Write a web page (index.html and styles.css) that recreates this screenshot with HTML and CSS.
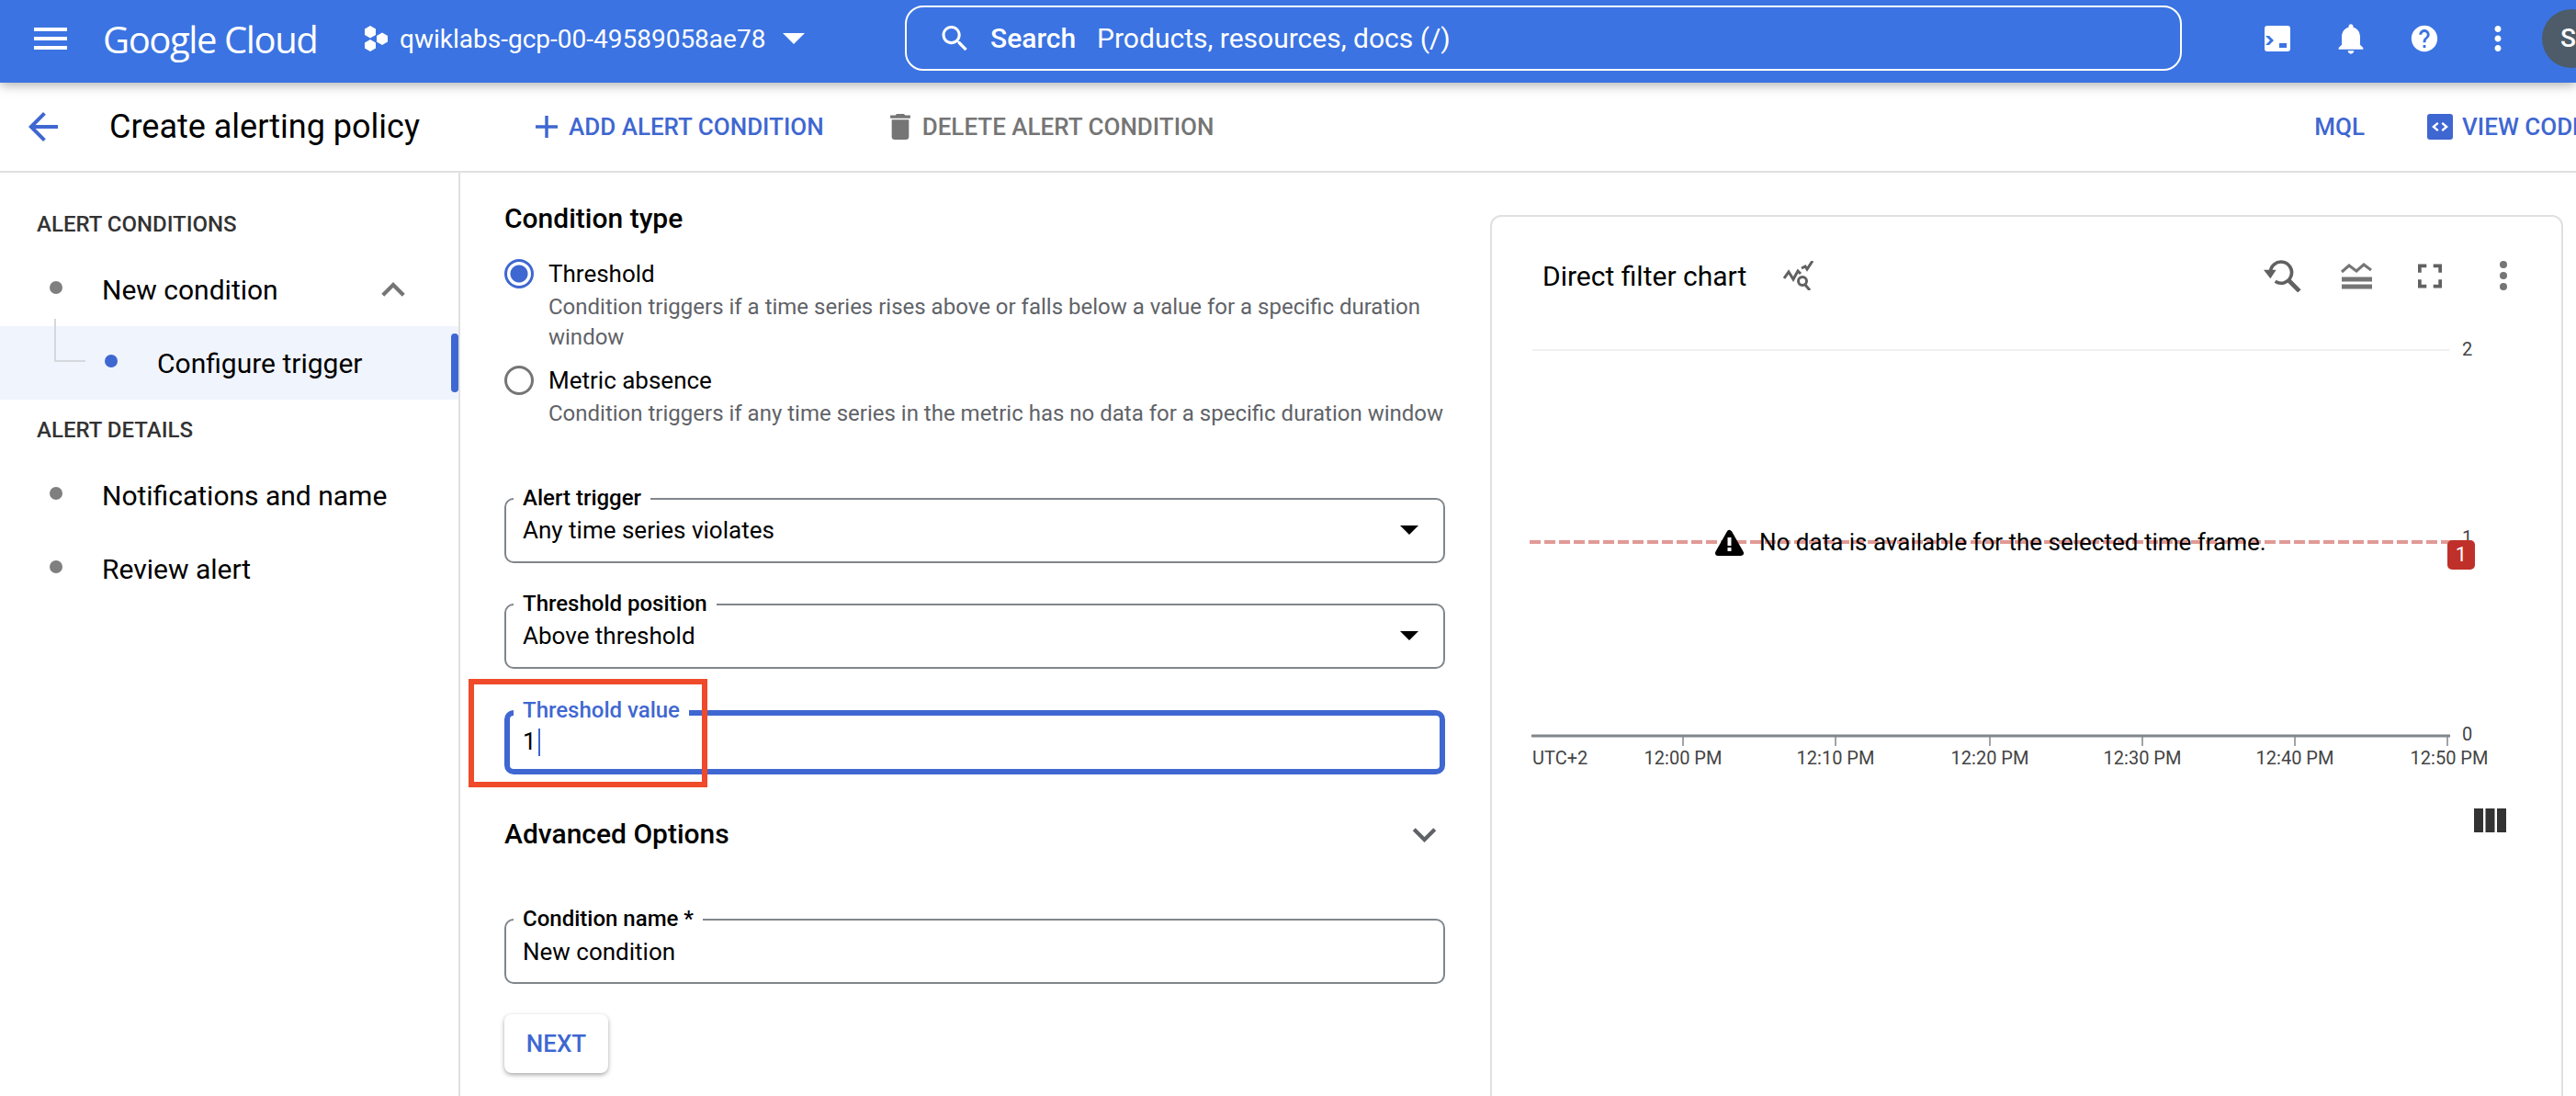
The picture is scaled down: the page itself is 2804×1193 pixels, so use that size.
FILE: index.html

```html
<!DOCTYPE html>
<html lang="en">
<head>
  <meta charset="UTF-8" />
  <title>Create alerting policy - Google Cloud</title>
  <link rel="stylesheet" href="styles.css">
</head>
<body>
  <header class="topbar">
    <svg class="menu-icon" viewBox="0 0 24 24"><path d="M3 18h18v-2H3v2zm0-5h18v-2H3v2zm0-7v2h18V6H3z"/></svg>
    <span class="logo">Google Cloud</span>
    <svg class="project-icon" viewBox="0 0 27 28">
      <polygon points="7,0 13,3.5 13,10 7,13.5 1,10 1,3.5"/>
      <polygon points="20,7.5 26,11 26,17.5 20,21 14,17.5 14,11"/>
      <polygon points="7,15 13,18.5 13,24.500 7,28 1,24.500 1,18.5"/>
    </svg>
    <span class="project-name">qwiklabs-gcp-00-49589058ae78</span>
    <span class="project-caret"></span>
    <div class="search">
      <svg class="search-icon" viewBox="3 3 18 18"><path d="M15.5 14h-.79l-.28-.27C15.41 12.59 16 11.11 16 9.5 16 5.91 13.09 3 9.5 3S3 5.91 3 9.5 5.91 16 9.5 16c1.61 0 3.09-.59 4.23-1.57l.27.28v.79l5 4.99L20.49 19l-4.99-5zm-6 0C7.01 14 5 11.99 5 9.5S7.01 5 9.5 5 14 7.01 14 9.5 11.99 14 9.5 14z"/></svg>
      <span class="search-word">Search</span>
      <span class="search-hint">Products, resources, docs (/)</span>
    </div>
    <div class="top-icons">
      <span class="top-icon">
        <svg width="28" height="28" viewBox="0 0 28 28"><path fill-rule="evenodd" d="M3 0h22a3 3 0 0 1 3 3v22a3 3 0 0 1-3 3H3a3 3 0 0 1-3-3V3a3 3 0 0 1 3-3zM1 11l5 5-5 5h4l5-5-5-5zM16 19v5h8v-5z"/></svg>
      </span>
      <span class="top-icon">
        <svg width="40" height="40" viewBox="0 0 24 24"><path d="M12 22c1.100 0 2-.9 2-2h-4c0 1.100.89 2 2 2zm6-6v-5c0-3.070-1.640-5.640-4.500-6.320V4c0-.83-.67-1.500-1.500-1.500s-1.500.67-1.500 1.500v.68C7.630 5.360 6 7.920 6 11v5l-2 2v1h16v-1l-2-2z"/></svg>
      </span>
      <span class="top-icon">
        <svg width="34" height="34" viewBox="0 0 24 24"><path d="M12 2C6.480 2 2 6.480 2 12s4.480 10 10 10 10-4.480 10-10S17.520 2 12 2zm1 17h-2v-2h2v2zm2.070-7.750l-.9.92C13.450 12.900 13 13.500 13 15h-2v-.5c0-1.100.45-2.100 1.170-2.830l1.240-1.260c.37-.36.59-.86.59-1.410 0-1.100-.9-2-2-2s-2 .9-2 2H8c0-2.210 1.790-4 4-4s4 1.790 4 4c0 .88-.36 1.680-.93 2.250z"/></svg>
      </span>
      <span class="top-icon">
        <svg width="42" height="42" viewBox="0 0 24 24"><path d="M12 8c1.100 0 2-.9 2-2s-.9-2-2-2-2 .9-2 2 .9 2 2 2zm0 2c-1.100 0-2 .9-2 2s.9 2 2 2 2-.9 2-2-.9-2-2-2zm0 6c-1.100 0-2 .9-2 2s.9 2 2 2 2-.9 2-2-.9-2-2-2z"/></svg>
      </span>
    </div>
    <span class="avatar">S</span>
  </header>

  <div class="subbar">
    <svg class="back-icon" viewBox="0 0 24 24"><path d="M20 11H7.830l5.590-5.590L12 4l-8 8 8 8 1.410-1.410L7.830 13H20v-2z"/></svg>
    <h1 class="page-title">Create alerting policy</h1>
    <a class="action add-action">
      <svg viewBox="5 5 14 14"><path d="M19 13h-6v6h-2v-6H5v-2h6V5h2v6h6v2z"/></svg>
      ADD ALERT CONDITION
    </a>
    <a class="action delete-action">
      <svg viewBox="5 3 14 18"><path d="M6 19c0 1.100.9 2 2 2h8c1.100 0 2-.9 2-2V7H6v12zM19 4h-3.500l-1-1h-5l-1 1H5v2h14V4z"/></svg>
      DELETE ALERT CONDITION
    </a>
    <a class="action mql-action">MQL</a>
    <a class="action code-action">
      <svg viewBox="0 0 28 28"><path fill-rule="evenodd" d="M3 0h22a3 3 0 0 1 3 3v22a3 3 0 0 1-3 3H3a3 3 0 0 1-3-3V3a3 3 0 0 1 3-3zM11 9l-6 5 6 5 1.500-1.800L8.800 14l3.700-3.200zM17 9l-1.500 1.800 3.700 3.200-3.700 3.200L17 19l6-5z"/></svg>
      VIEW CODE
    </a>
  </div>

  <div class="layout">
    <nav class="sidebar">
      <div class="nav-heading">ALERT CONDITIONS</div>
      <div class="nav-row">
        <span class="dot"></span>
        <span class="nav-text">New condition</span>
        <svg class="nav-chevron" viewBox="6 8 12 8"><path d="M7.410 15.410L12 10.830l4.590 4.580L18 14l-6-6-6 6z"/></svg>
      </div>
      <div class="nav-row nav-active">
        <span class="tree-line"></span>
        <span class="dot dot-blue"></span>
        <span class="nav-text">Configure trigger</span>
        <span class="active-bar"></span>
      </div>
      <div class="nav-heading">ALERT DETAILS</div>
      <div class="nav-row">
        <span class="dot"></span>
        <span class="nav-text">Notifications and name</span>
      </div>
      <div class="nav-row">
        <span class="dot"></span>
        <span class="nav-text">Review alert</span>
      </div>
    </nav>

    <main class="form">
      <h2 class="section-title">Condition type</h2>

      <div class="radio-row">
        <span class="radio radio-on"></span>
        <div>
          <div class="radio-label">Threshold</div>
          <div class="radio-desc">Condition triggers if a time series rises above or falls below a value for a specific duration window</div>
        </div>
      </div>
      <div class="radio-row radio-second">
        <span class="radio"></span>
        <div>
          <div class="radio-label">Metric absence</div>
          <div class="radio-desc">Condition triggers if any time series in the metric has no data for a specific duration window</div>
        </div>
      </div>

      <div class="field first-field">
        <label class="field-label">Alert trigger</label>
        <span class="field-value">Any time series violates</span>
        <span class="select-caret"></span>
      </div>
      <div class="field">
        <label class="field-label">Threshold position</label>
        <span class="field-value">Above threshold</span>
        <span class="select-caret"></span>
      </div>
      <div class="field field-focus">
        <label class="field-label">Threshold value</label>
        <span class="field-value">1</span><span class="text-caret"></span>
        <span class="callout"></span>
      </div>

      <div class="advanced">
        <h2 class="section-title">Advanced Options</h2>
        <svg class="advanced-chevron" viewBox="6 8 12 8"><path d="M7.410 8.590L12 13.170l4.590-4.580L18 10l-6 6-6-6z"/></svg>
      </div>

      <div class="field name-field">
        <label class="field-label">Condition name *</label>
        <span class="field-value">New condition</span>
      </div>

      <button class="next-btn">NEXT</button>
    </main>

    <section class="chart-card">
      <div class="chart-head">
        <span class="chart-title">Direct filter chart</span>
        <svg class="explore-icon" viewBox="0 0 35 32" fill="none" stroke="#616161" stroke-width="3">
          <path d="M1 19l5-7 5 8 5-9 3 3"/>
          <path d="M20 8l4-2 2 3 6-9"/>
          <circle cx="21" cy="22" r="4.500"/>
          <path d="M24 26l5 6"/>
        </svg>
        <div class="chart-tools">
          <svg class="tool-reset" viewBox="0 0 39 34" fill="none" stroke="#616161" stroke-width="3.500">
            <path d="M7 14a11 11 0 1 1 5 9"/>
            <path d="M26 22l11 11" stroke-width="4.500"/>
            <path d="M0 11h13l-6 9z" fill="#616161" stroke="none"/>
          </svg>
          <svg class="tool-legend" viewBox="0 0 35 30" fill="none" stroke="#757575">
            <path d="M1 11l8-7 8 6 8-7 8 6" stroke-width="3"/>
            <path d="M1 19h33M1 27h33" stroke-width="5"/>
          </svg>
          <svg class="tool-full" viewBox="5 5 14 14"><path d="M7 14H5v5h5v-2H7v-3zm-2-4h2V7h3V5H5v5zm12 7h-3v2h5v-5h-2v3zM14 5v2h3v3h2V5h-5z"/></svg>
          <svg class="tool-dots" viewBox="0 0 8 32"><circle cx="4" cy="4" r="4"/><circle cx="4" cy="16" r="4"/><circle cx="4" cy="28" r="4"/></svg>
        </div>
      </div>

      <svg class="plot" viewBox="1624 364 1164 560" width="1164" height="560">
        <line x1="1668" y1="381" x2="2666" y2="381" stroke="#f0f0f0" stroke-width="2"/>
        <line x1="1665" y1="590" x2="2668" y2="590" stroke="#e19a96" stroke-width="4" stroke-dasharray="12 4"/>
        <line x1="1667" y1="801" x2="2667" y2="801" stroke="#80868b" stroke-width="3"/>
        <g stroke="#80868b" stroke-width="1.500">
          <line x1="1832" y1="801" x2="1832" y2="812"/>
          <line x1="1998" y1="801" x2="1998" y2="812"/>
          <line x1="2166" y1="801" x2="2166" y2="812"/>
          <line x1="2332" y1="801" x2="2332" y2="812"/>
          <line x1="2498" y1="801" x2="2498" y2="812"/>
          <line x1="2664" y1="801" x2="2664" y2="812"/>
        </g>
        <g class="tick-text">
          <text x="2680" y="387">2</text>
          <text x="2680" y="592">1</text>
          <text x="2680" y="806">0</text>
          <text x="1668" y="832">UTC+2</text>
          <text x="1832" y="832" text-anchor="middle">12:00 PM</text>
          <text x="1998" y="832" text-anchor="middle">12:10 PM</text>
          <text x="2166" y="832" text-anchor="middle">12:20 PM</text>
          <text x="2332" y="832" text-anchor="middle">12:30 PM</text>
          <text x="2498" y="832" text-anchor="middle">12:40 PM</text>
          <text x="2666" y="832" text-anchor="middle">12:50 PM</text>
        </g>
        <path d="M1882.500 580L1895 602H1870z" fill="#000" stroke="#000" stroke-width="6" stroke-linejoin="round"/>
        <rect x="1880.500" y="585" width="4" height="9" fill="#fff"/>
        <rect x="1880.500" y="596" width="4" height="4" fill="#fff"/>
        <text class="no-data" x="1915" y="599">No data is available for the selected time frame.</text>
        <rect x="2664" y="588" width="30" height="32" rx="5" fill="#c0302a"/>
        <text class="badge-text" x="2679" y="611" text-anchor="middle">1</text>
        <g fill="#333">
          <rect x="2693" y="880" width="10" height="26"/>
          <rect x="2705.500" y="880" width="10" height="26"/>
          <rect x="2718" y="880" width="10" height="26"/>
        </g>
      </svg>
    </section>
  </div>
</body>
</html>
```

FILE: styles.css

```css
* { box-sizing: border-box; }
html, body { margin: 0; height: 1193px; overflow: hidden; }
body { width: 2804px; font-family: "Roboto", sans-serif; background: #fff; color: #000; }
h1, h2 { margin: 0; font-weight: 500; }

/* top blue bar */
.topbar { position: relative; z-index: 2; display: flex; align-items: center; height: 90px; padding-left: 31px; background: #3b73e2; color: #fff; box-shadow: 0 2px 12px rgba(0, 0, 0, .35); overflow: hidden; }
.topbar > * { flex: none; }
.topbar svg { fill: #fff; flex: none; }
.menu-icon { width: 48px; height: 48px; margin-top: -6px; }
.logo { margin-left: 33px; margin-top: -6px; width: 233px; font-family: "Open Sans", sans-serif; font-size: 40px; letter-spacing: -1.400px; white-space: nowrap; }
.project-icon { width: 27px; height: 28px; margin-left: 51px; margin-top: -6px; }
.project-name { margin-left: 12px; margin-top: -6px; width: 417px; font-size: 28px; white-space: nowrap; }
.project-caret { width: 0; height: 0; margin-top: -6px; border-left: 12px solid transparent; border-right: 12px solid transparent; border-top: 12px solid #fff; }
.search { display: flex; align-items: center; width: 1390px; height: 71px; margin-left: 109px; margin-top: -7px; padding-left: 38px; border: 2px solid #fff; border-radius: 20px; font-size: 30px; }
.search-icon { width: 29px; height: 28px; }
.search-word { margin-left: 24px; font-weight: 500; }
.search-hint { margin-left: 23px; }
.top-icons { display: flex; margin-left: 64px; margin-top: -6px; }
.top-icon { display: flex; align-items: center; justify-content: center; width: 80px; height: 48px; }
.avatar { width: 64px; height: 64px; margin-left: 8px; margin-top: -6px; padding-left: 20px; border-radius: 50%; background: #4d5c68; font-size: 28px; font-weight: 500; line-height: 64px; }

/* title row */
.subbar { display: flex; align-items: center; height: 98px; padding-left: 23px; border-bottom: 2px solid #e0e0e0; white-space: nowrap; overflow: hidden; }
.back-icon { flex: none; width: 48px; height: 48px; fill: #3f67d1; }
.page-title { flex: none; margin-left: 48px; width: 464px; font-size: 36px; font-weight: 400; }
.action { display: flex; flex: none; align-items: center; font-size: 26px; font-weight: 500; color: #3f67d1; }
.action svg { fill: currentColor; flex: none; }
.add-action svg { width: 24px; height: 24px; margin-right: 12px; }
.delete-action { margin-left: 71px; color: #757575; }
.delete-action svg { width: 24px; height: 28px; margin-right: 12px; }
.mql-action { margin-left: 1198px; }
.code-action { margin-left: 68px; }
.code-action svg { width: 28px; height: 28px; margin-right: 10px; }

.layout { display: flex; height: 1005px; }

/* left navigation */
.sidebar { flex: none; width: 501px; padding-top: 23px; border-right: 2px solid #e0e0e0; }
.nav-heading { height: 64px; padding: 19px 0 0 40px; font-size: 24px; font-weight: 500; line-height: 28px; color: #333; }
.nav-row { position: relative; display: flex; align-items: center; height: 80px; padding-left: 54px; font-size: 30px; }
.dot { flex: none; width: 14px; height: 14px; margin-top: -4px; border-radius: 50%; background: #7f7f7f; }
.dot-blue { margin-left: 60px; background: #3f67d1; }
.nav-text { margin-left: 43px; }
.nav-chevron { width: 28px; height: 17px; margin-left: 111px; fill: #757575; }
.nav-active { background: #f0f4fd; }
.tree-line { position: absolute; left: 59px; top: -8px; width: 34px; height: 47px; border-left: 2px solid #d5d8dc; border-bottom: 2px solid #d5d8dc; }
.active-bar { position: absolute; right: 0; top: 8px; width: 8px; height: 64px; border-radius: 4px; background: #3f67d1; }

/* form column */
.form { flex: none; width: 1072px; padding: 33px 0 0 48px; }
.section-title { font-size: 30px; line-height: 34px; }
.radio-row { display: flex; margin-top: 27px; }
.radio-second { margin-top: 14px; }
.radio { flex: none; width: 32px; height: 32px; margin-right: 16px; border: 3px solid #757575; border-radius: 50%; }
.radio-on { border-color: #3f67d1; background: radial-gradient(circle, #3f67d1 0 9px, #fff 10px); }
.radio-label { font-size: 26px; line-height: 32px; }
.radio-desc { width: 960px; margin-top: 4px; font-size: 24px; line-height: 33px; color: #5f6368; }
.radio-second .radio-desc { white-space: nowrap; }

.field { position: relative; width: 1024px; height: 71px; margin-top: 44px; padding: 17px 0 0 18px; border: 2px solid #80868b; border-radius: 10px; font-size: 26px; line-height: 32px; }
.first-field { margin-top: 75px; }
.field-label { position: absolute; left: 8px; top: -17px; padding: 0 10px; background: #fff; font-size: 24px; font-weight: 500; line-height: 30px; }
.select-caret { position: absolute; right: 27px; top: 28px; width: 0; height: 0; border-left: 10px solid transparent; border-right: 10px solid transparent; border-top: 10px solid #000; }
.field-focus { height: 70px; margin-top: 45px; padding: 12px 0 0 14px; border: 6px solid #3f67d1; }
.field-focus .field-label { left: 4px; top: -21px; color: #3f67d1; }
.text-caret { display: inline-block; width: 2px; height: 30px; margin-left: 2px; vertical-align: -7px; background: #3f67d1; }
.callout { position: absolute; left: -45px; top: -40px; width: 260px; height: 118px; border: 6px solid #ef4a2a; }

.advanced { display: flex; align-items: center; justify-content: space-between; width: 1024px; margin-top: 48px; padding-right: 9px; }
.advanced-chevron { width: 27px; height: 17px; fill: #5f6368; }
.name-field { margin-top: 75px; padding-top: 18px; }
.next-btn { display: block; width: 113px; height: 64px; margin-top: 33px; border: 0; border-radius: 8px; background: #fff; box-shadow: 0 2px 5px rgba(0, 0, 0, .35); font-family: "Roboto", sans-serif; font-size: 26px; font-weight: 500; color: #3f67d1; }

/* chart card */
.chart-card { flex: none; width: 1168px; height: 1100px; margin: 46px 0 0 49px; border: 2px solid #e0e0e0; border-radius: 12px; }
.chart-head { display: flex; align-items: center; height: 128px; padding-left: 55px; }
.chart-title { font-size: 30px; }
.explore-icon { width: 35px; height: 32px; margin-left: 40px; }
.chart-tools { display: flex; align-items: center; margin-left: auto; }
.tool-reset { width: 41px; height: 36px; margin-right: 43px; }
.tool-legend { width: 35px; height: 30px; margin-right: 49px; }
.tool-full { width: 26px; height: 27px; margin-right: 63px; fill: #616161; }
.tool-dots { width: 8px; height: 32px; margin-right: 59px; fill: #757575; }
.plot { display: block; }
.tick-text { font-size: 20px; fill: #444; }
.no-data { font-size: 26px; fill: #000; }
.badge-text { font-size: 22px; fill: #fff; }
```
